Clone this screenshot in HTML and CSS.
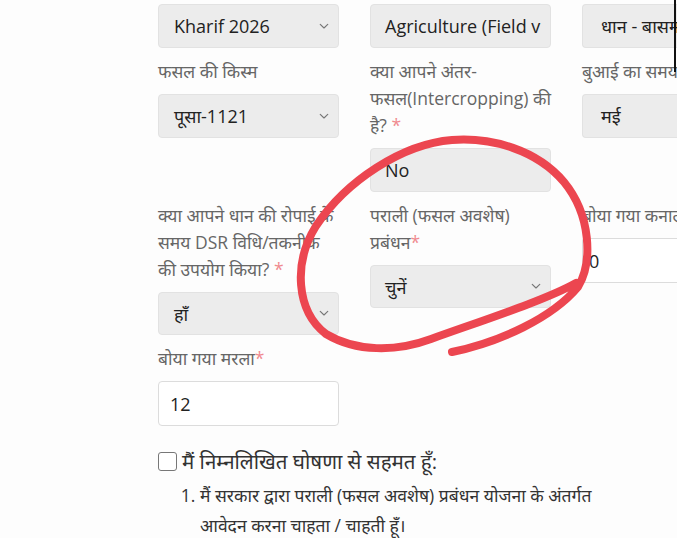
FILE: index.html
```html
<!DOCTYPE html>
<html lang="hi">
<head>
<meta charset="utf-8">
<title>Form</title>
<link rel="stylesheet" href="styles.css">
</head>
<body>
<div class="page">
  <div class="form-grid">
    <div class="field c1 r1">
      <div class="select"><span>Kharif 2026</span><svg class="chev" viewBox="0 0 12 8"><path d="M1.5 1.5 L6 5.8 L10.5 1.5"/></svg></div>
    </div>
    <div class="field c2 r1">
      <div class="select"><span>Agriculture (Field v</span></div>
    </div>
    <div class="field c3 r1">
      <div class="select"><span>धान - बासमती</span></div>
    </div>

    <div class="field c1 r2">
      <label class="lbl">फसल की किस्म</label>
      <div class="select"><span>पूसा-1121</span><svg class="chev" viewBox="0 0 12 8"><path d="M1.5 1.5 L6 5.8 L10.5 1.5"/></svg></div>
    </div>
    <div class="field c2 r2">
      <label class="lbl">क्या आपने अंतर-<br>फसल(Intercropping) की<br>है? <i>*</i></label>
      <div class="select"><span>No</span></div>
    </div>
    <div class="field c3 r2">
      <label class="lbl nowrap">बुआई का समय</label>
      <div class="select"><span>मई</span></div>
    </div>

    <div class="field c1 r3">
      <label class="lbl nowrap">क्या आपने धान की रोपाई के<br>समय DSR विधि/तकनीक<br>की उपयोग किया? <i>*</i></label>
      <div class="select short"><span>हाँ</span><svg class="chev" viewBox="0 0 12 8"><path d="M1.5 1.5 L6 5.8 L10.5 1.5"/></svg></div>
    </div>
    <div class="field c2 r3">
      <label class="lbl">पराली (फसल अवशेष)<br>प्रबंधन<i>*</i></label>
      <div class="select short"><span>चुनें</span><svg class="chev" viewBox="0 0 12 8"><path d="M1.5 1.5 L6 5.8 L10.5 1.5"/></svg></div>
    </div>
    <div class="field c3 r3">
      <label class="lbl nowrap">बोया गया कनाल</label>
      <div class="input"><span>0</span></div>
    </div>

    <div class="field c1 r4">
      <label class="lbl">बोया गया मरला<i>*</i></label>
      <div class="input"><span>12</span></div>
    </div>
  </div>

  <div class="declare">
    <div class="check-row"><span class="box"></span><span class="check-text">मैं निम्नलिखित घोषणा से सहमत हूँ:</span></div>
    <ol class="decl-list">
      <li>मैं सरकार द्वारा पराली (फसल अवशेष) प्रबंधन योजना के अंतर्गत<br>आवेदन करना चाहता / चाहती हूँ।</li>
    </ol>
  </div>
</div>

<svg class="scribble" viewBox="0 0 677 538" width="677" height="538">
  <path d="M452 352 C500 342 552 318 578 287 C593 262 591 215 564 182 C537 150 492 137 452 140 C402 144 346 181 316 226 C293 263 296 311 326 334 C356 352 396 352 431 339 C481 321 546 300 576 283"/>
</svg>
<div class="edge-bar"></div>
</body>
</html>
```

FILE: styles.css
```css
html, body {
  margin: 0;
  padding: 0;
  background: #fdfdfd;
  overflow: hidden;
  width: 677px;
  height: 538px;
}
body {
  font-family: "Open Sans", "Noto Sans", "Noto Sans Devanagari", sans-serif;
  color: #222;
  position: relative;
}
.page {
  padding: 4px 0 0 158px;
}
.form-grid {
  display: grid;
  grid-template-columns: 181px 181px 181px;
  column-gap: 31px;
  row-gap: 10px;
  align-items: start;
}
.c1 { grid-column: 1; }
.c2 { grid-column: 2; }
.c3 { grid-column: 3; }
.r1 { grid-row: 1; }
.r2 { grid-row: 2; }
.r3 { grid-row: 3; }
.r4 { grid-row: 4; }

.field {
  display: flex;
  flex-direction: column;
}
.lbl {
  font-size: 17.5px;
  line-height: 27px;
  color: #666;
  margin-bottom: 9px;
  white-space: nowrap;
}
.lbl i {
  font-style: normal;
  color: #f08a8f;
}
.nowrap { white-space: nowrap; }

.select, .input {
  box-sizing: border-box;
  height: 44px;
  border-radius: 4px;
  display: flex;
  align-items: center;
  padding: 0 9px 0 15px;
  font-size: 18px;
  color: #222;
  white-space: nowrap;
  overflow: hidden;
}
.select {
  background: #ececec;
  border: 1px solid #e2e2e2;
  justify-content: space-between;
}
.select.short { height: 43px; }
.input {
  background: #fff;
  border: 1px solid #dcdcdc;
  padding-left: 11px;
  height: 45px;
}
.c3 .select, .c3 .input { border-right: none; border-radius: 4px 0 0 4px; }
.c3 .select { padding-left: 18px; }
.c3 .input { padding-left: 6px; }
.c2 .select { padding-left: 14px; }
.chev {
  width: 10px;
  height: 7px;
  flex: none;
}
.chev path {
  fill: none;
  stroke: #777;
  stroke-width: 1.4;
  stroke-linecap: round;
  stroke-linejoin: round;
}

.declare {
  margin-top: 24px;
}
.check-row {
  display: flex;
  align-items: center;
  gap: 5px;
  height: 22px;
}
.box {
  box-sizing: border-box;
  width: 19px;
  height: 19px;
  border: 1.5px solid #777;
  border-radius: 3px;
  background: #fff;
}
.check-text {
  font-size: 20.5px;
  color: #333;
}
.decl-list {
  margin: 8px 0 0 0;
  padding: 0 0 0 42px;
  font-size: 17.5px;
  line-height: 30px;
  color: #333;
  white-space: nowrap;
}

.scribble {
  position: absolute;
  left: 0;
  top: 0;
  pointer-events: none;
}
.scribble path {
  fill: none;
  stroke: #ec4650;
  stroke-width: 8;
  stroke-linecap: round;
  stroke-linejoin: round;
}
.edge-bar {
  position: absolute;
  left: 674px;
  top: 0;
  width: 2px;
  height: 72px;
  background: #111;
}
```
